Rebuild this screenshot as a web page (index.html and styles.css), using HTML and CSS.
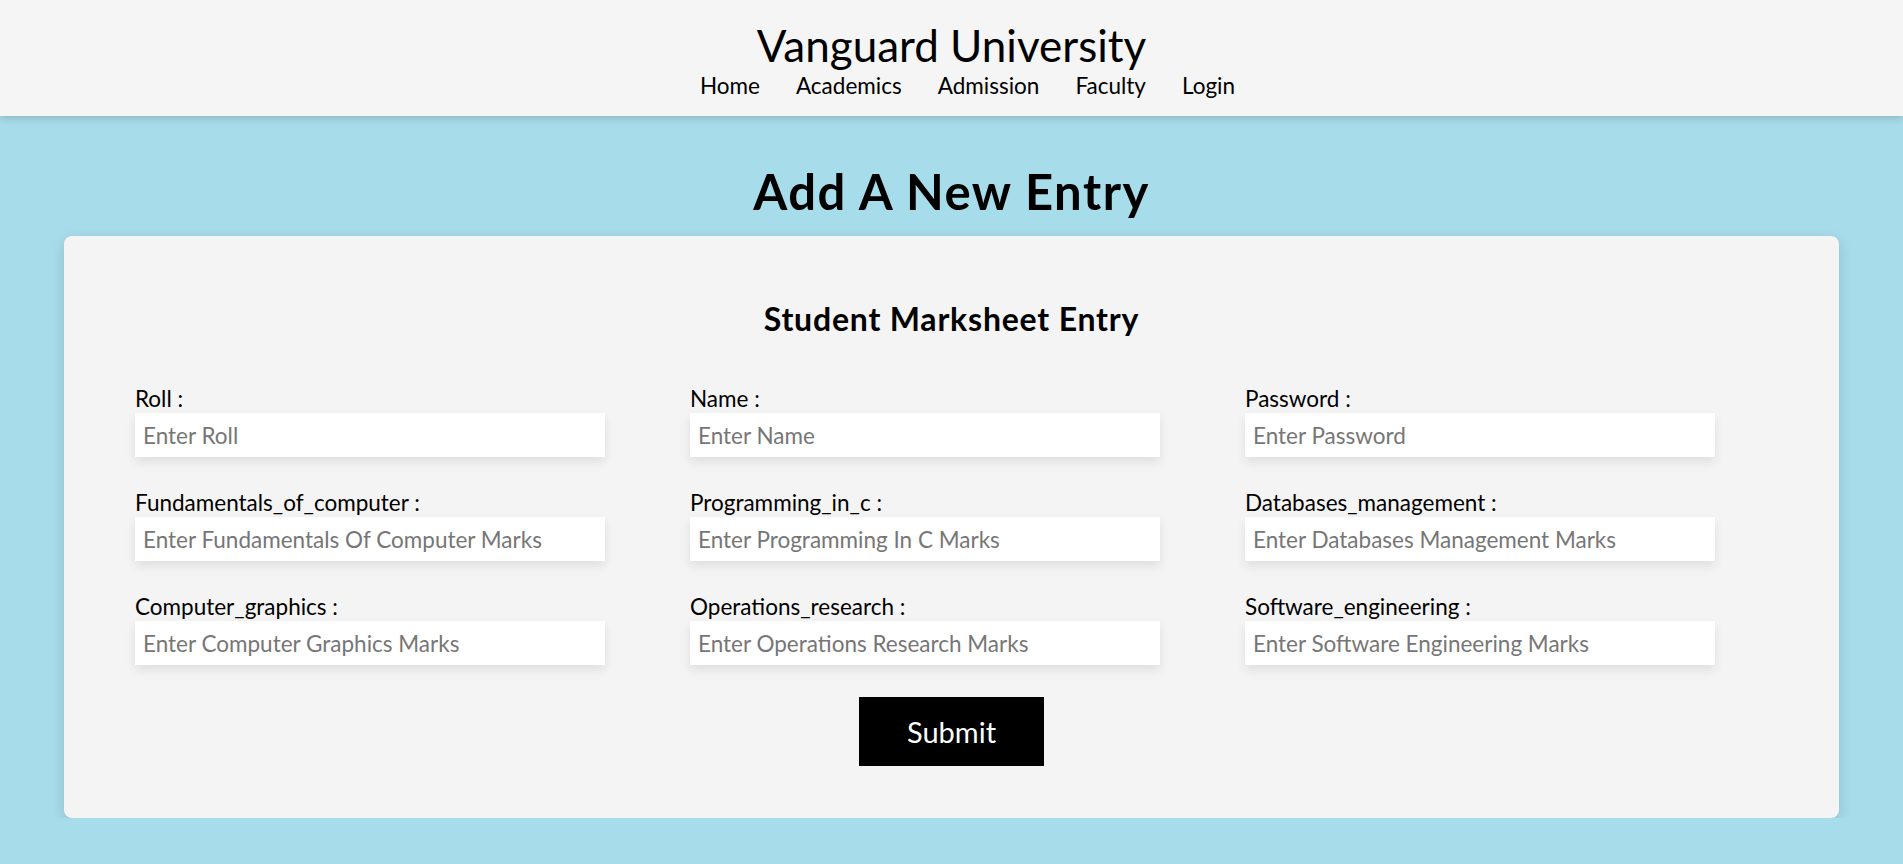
FILE: index.html
```html
<!DOCTYPE html>
<html lang="en">
<head>
<meta charset="utf-8">
<title>Vanguard University - Add A New Entry</title>
<link rel="stylesheet" href="styles.css">
</head>
<body>
<header class="site-header">
  <div class="site-title">Vanguard University</div>
  <nav class="site-nav">
    <a href="#">Home</a>
    <a href="#">Academics</a>
    <a href="#">Admission</a>
    <a href="#">Faculty</a>
    <a href="#">Login</a>
  </nav>
</header>
<main>
  <h1 class="page-heading">Add A New Entry</h1>
  <section class="card">
    <h2 class="card-title">Student Marksheet Entry</h2>
    <form class="entry-form">
      <div class="field-grid">
        <div class="field"><label>Roll :</label><input type="text" placeholder="Enter Roll"></div>
        <div class="field"><label>Name :</label><input type="text" placeholder="Enter Name"></div>
        <div class="field"><label>Password :</label><input type="text" placeholder="Enter Password"></div>
        <div class="field"><label>Fundamentals_of_computer :</label><input type="text" placeholder="Enter Fundamentals Of Computer Marks"></div>
        <div class="field"><label>Programming_in_c :</label><input type="text" placeholder="Enter Programming In C Marks"></div>
        <div class="field"><label>Databases_management :</label><input type="text" placeholder="Enter Databases Management Marks"></div>
        <div class="field"><label>Computer_graphics :</label><input type="text" placeholder="Enter Computer Graphics Marks"></div>
        <div class="field"><label>Operations_research :</label><input type="text" placeholder="Enter Operations Research Marks"></div>
        <div class="field"><label>Software_engineering :</label><input type="text" placeholder="Enter Software Engineering Marks"></div>
      </div>
      <div class="actions"><button type="button" class="submit-btn">Submit</button></div>
    </form>
  </section>
</main>
</body>
</html>
```
FILE: styles.css
```css
* { box-sizing: border-box; }

html, body {
  margin: 0;
  padding: 0;
}

body {
  background: #a7dcea;
  font-family: Lato, "Open Sans", sans-serif;
  color: #000;
  overflow: hidden;
}

.site-header {
  background: #f5f5f5;
  height: 116px;
  padding-top: 21px;
  text-align: center;
  box-shadow: 0 2px 8px rgba(0, 0, 0, 0.18);
  position: relative;
}

.site-title {
  font-size: 44px;
  line-height: 48px;
  font-weight: 400;
}

.site-nav {
  margin-top: 3px;
  padding-left: 32px;
  display: flex;
  justify-content: center;
  gap: 36px;
  font-size: 22.5px;
  line-height: 28px;
}

.site-nav a {
  color: #000;
  text-decoration: none;
}

.page-heading {
  margin: 50px 0 20px;
  text-align: center;
  font-size: 49px;
  line-height: 50px;
  font-weight: 700;
  letter-spacing: 1.5px;
}

.card {
  margin: 0 64px;
  background: #f4f4f4;
  border-radius: 8px;
  box-shadow: 0 4px 14px rgba(0, 0, 0, 0.14);
  padding: 66px 0 52px;
}

.card-title {
  margin: 0 0 49px;
  text-align: center;
  font-size: 32px;
  line-height: 34px;
  font-weight: 700;
  letter-spacing: 0.8px;
}

.field-grid {
  display: grid;
  grid-template-columns: repeat(3, 470px);
  column-gap: 85px;
  row-gap: 32px;
  padding-left: 71px;
}

.field {
  display: flex;
  flex-direction: column;
}

.field label {
  font-size: 22.5px;
  line-height: 28px;
}

.field input {
  height: 44px;
  border: none;
  outline: none;
  background: #fff;
  padding: 0 8px;
  font-family: Lato, "Open Sans", sans-serif;
  font-size: 22.5px;
  color: #333;
  box-shadow: 0 5px 10px rgba(0, 0, 0, 0.09);
}

.field input::placeholder {
  color: #767676;
}

.actions {
  margin-top: 32px;
  display: flex;
  justify-content: center;
}

.submit-btn {
  width: 185px;
  height: 69px;
  background: #000;
  color: #fff;
  border: none;
  font-family: Lato, "Open Sans", sans-serif;
  font-size: 29px;
  padding: 0;
  cursor: pointer;
}
```
